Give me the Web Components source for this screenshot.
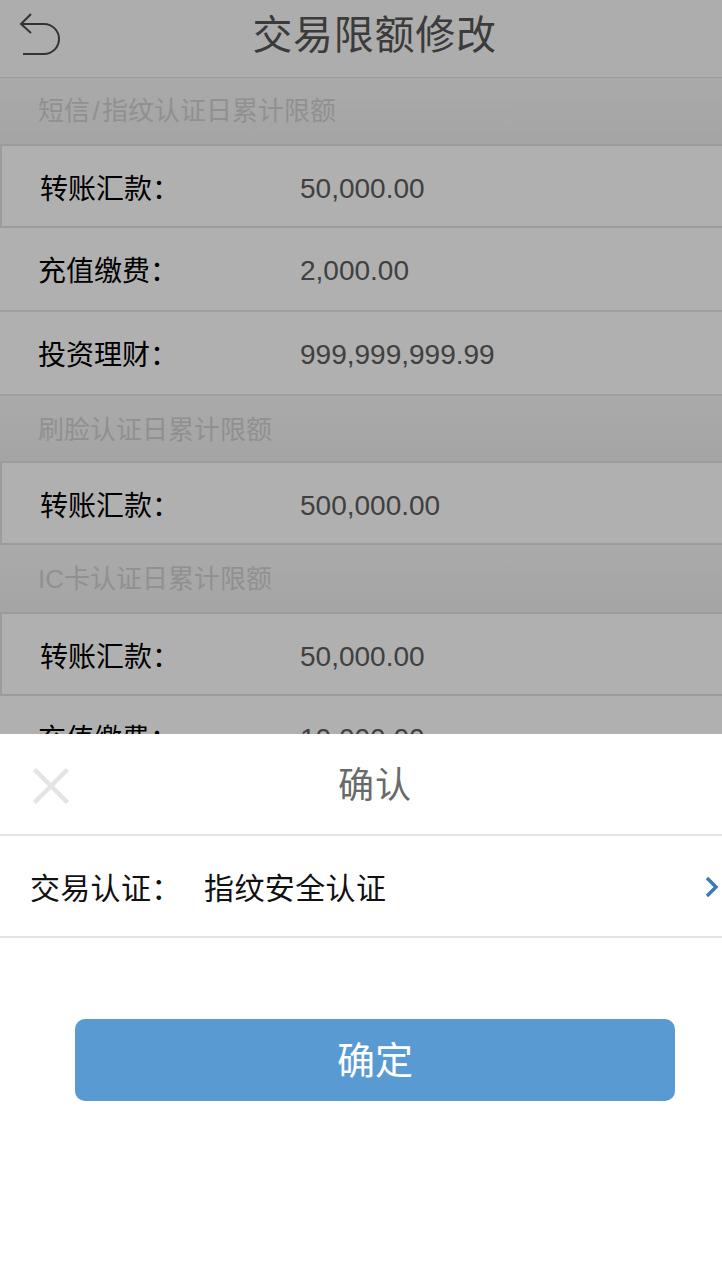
<!DOCTYPE html>
<html lang="zh"><head><meta charset="utf-8"><title>交易限额修改</title>
<style>
html,body{margin:0;padding:0;background:#fff}
body{width:722px;height:1283px;overflow:hidden;position:relative;font-family:"Liberation Sans","Noto Sans CJK SC",sans-serif}
</style></head><body>
<limit-page>
  <app-header title="交易限额修改"></app-header>
  <limit-section label="短信/指纹认证日累计限额" style="height:66px;padding-bottom:5px"></limit-section>
  <limit-row first label="转账汇款：" value="50,000.00"></limit-row>
  <limit-row label="充值缴费：" value="2,000.00"></limit-row>
  <limit-row label="投资理财：" value="999,999,999.99"></limit-row>
  <limit-section label="刷脸认证日累计限额" style="height:65px;padding-bottom:2px"></limit-section>
  <limit-row first label="转账汇款：" value="500,000.00"></limit-row>
  <limit-section label="IC卡认证日累计限额" style="height:67px;padding-bottom:4px"></limit-section>
  <limit-row first label="转账汇款：" value="50,000.00"></limit-row>
  <limit-row label="充值缴费：" value="10,000.00"></limit-row>
</limit-page>
<confirm-sheet></confirm-sheet>
<script>
function def(name, html, init){
  customElements.define(name, class extends HTMLElement{
    connectedCallback(){
      if(this.shadowRoot) return;
      const r=this.attachShadow({mode:'open'});
      r.innerHTML=html;
      if(init) init.call(this,r);
    }
  });
}
const FONT='"Liberation Sans","Noto Sans CJK SC",sans-serif';
def('limit-page',`<style>:host{display:flex;flex-direction:column;height:1283px;overflow:hidden;font-family:${FONT}}
::slotted(*){flex:none}</style><slot></slot>`);
def('app-header',`<style>
:host{display:block;height:77px;border-bottom:1px solid #e2e2e2;background:#f8f8f8}
.w{display:flex;align-items:center;justify-content:center;height:70px;position:relative}
h1{margin:0;padding-left:27px;font-weight:400;font-size:40px;letter-spacing:.7px;color:#555;line-height:70px}
svg{position:absolute;left:0;top:0}
</style><div class="w"><svg width="70" height="70" viewBox="0 0 70 70" fill="none" stroke="#4a4a4a" stroke-width="2"><path d="M31 14 21 24 31 33"/><path d="M21 24H44A15 15 0 0 1 44 54H23"/></svg><h1></h1></div>`,
function(r){r.querySelector('h1').textContent=this.getAttribute('title')});
def('limit-section',`<style>
:host{display:flex;align-items:center;padding-left:38px;box-sizing:border-box;background:linear-gradient(#f4f4f4,#ececec);font-size:26px;color:#cfcfcf}
i{font-style:normal;padding:0 2.4px}
</style><span></span>`,function(r){
  const s=r.querySelector('span');
  this.getAttribute('label').split('/').forEach((p,i)=>{
    if(i){const e=document.createElement('i');e.textContent='/';s.append(e)}
    s.append(p);
  });
});
def('limit-row',`<style>
:host{display:flex;align-items:center;box-sizing:border-box;height:84px;background:#fdfdfd;border-bottom:2px solid #e4e4e4;padding-left:38px;padding-bottom:2px}
:host([first]){border-top:2px solid #e0e0e0;border-left:2px solid #e0e0e0;border-bottom-color:#e0e0e0;padding-bottom:0}
.l{width:262px;font-size:28px;color:#000;white-space:nowrap;flex:none;margin-top:2px}
:host([first]) .l{width:260px}
.v{font-size:28px;color:#5c5c5c;margin-top:5px}
</style><span class="l"></span><span class="v"></span>`,function(r){
  r.querySelector('.l').textContent=this.getAttribute('label');
  r.querySelector('.v').textContent=this.getAttribute('value');
});
def('confirm-sheet',`<style>
:host{position:absolute;inset:0;display:flex;flex-direction:column;justify-content:flex-end;background:rgba(0,0,0,.3);font-family:${FONT}}
.s{background:#fff;height:549px;display:flex;flex-direction:column}
.t{border-bottom:2px solid #e4e4e4;display:flex;align-items:center;justify-content:center;position:relative;font-size:36px;letter-spacing:1px;color:#6a6a6a;padding:0 0 4px 28px;box-sizing:content-box;height:96px}
.t svg{position:absolute;left:32px;top:33px}
.r{height:100px;border-bottom:2px solid #e4e4e4;display:flex;align-items:center;padding-left:30px;font-size:30px;color:#111;position:relative}
.r .k{width:174px;flex:none;white-space:nowrap}
.r .k b{font-weight:400;letter-spacing:.3px}
.r .w{letter-spacing:.4px}
.r svg{position:absolute;right:2px;top:40px}
.b{margin:81px 47px 0 75px;height:82px;box-sizing:border-box;padding-bottom:6px;background:#5a9ad2;border-radius:10px;display:flex;align-items:center;justify-content:center;color:#fff;font-size:38px}
</style><div class="s">
<div class="t"><svg width="38" height="38" viewBox="0 0 38 38" stroke="#e4e4e4" stroke-width="4.500"><path d="M2.500 2.500 35.500 35.500M35.500 2.500 2.500 35.500"/></svg><span>确认</span></div>
<div class="r"><span class="k"><b>交易认证：</b></span><span class="w">指纹安全认证</span><svg width="16" height="22" viewBox="0 0 16 22" fill="none" stroke="#3b7ab8" stroke-width="3.500"><path d="M3 2 12 11 3 20"/></svg></div>
<div class="b">确定</div></div>`);
</script>
</body></html>
